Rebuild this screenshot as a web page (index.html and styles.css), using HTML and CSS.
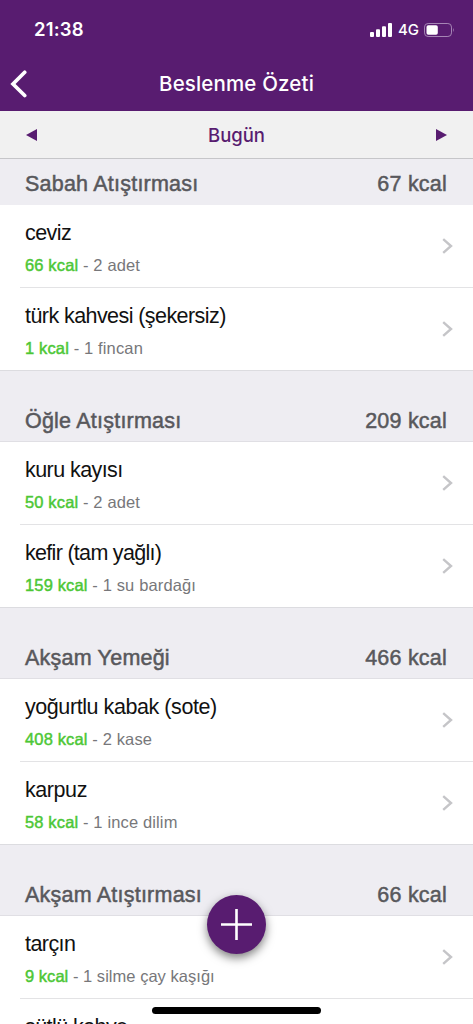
FILE: index.html
```html
<!DOCTYPE html>
<html lang="tr">
<head>
<meta charset="utf-8">
<meta name="viewport" content="width=device-width, initial-scale=1">
<title>Beslenme Özeti</title>
<link rel="stylesheet" href="styles.css">
</head>
<body>
<svg class="defs" width="0" height="0"><symbol id="chevron" viewBox="0 0 11 16"><path d="M1.2 1.2 9 8 1.2 14.8" fill="none" stroke="#c5c5c8" stroke-width="2.4"/></symbol></svg>
<div class="screen">
  <header class="top">
    <div class="status">
      <span class="time">21:38</span>
      <span class="signal">
        <svg width="22" height="14" viewBox="0 0 22 14" fill="#fff"><rect x="0" y="9" width="4" height="5" rx="1"/><rect x="6" y="6.3" width="4" height="7.7" rx="1"/><rect x="12" y="3.3" width="4" height="10.7" rx="1"/><rect x="18" y="0" width="4" height="14" rx="1"/></svg>
        <span class="network">4G</span>
        <svg width="31" height="14" viewBox="0 0 31 14"><rect x=".5" y=".5" width="27" height="13" rx="3.6" fill="none" stroke="#a685b5"/><rect x="2.5" y="2.2" width="11.3" height="9.6" rx="1.8" fill="#fff"/><path d="M29.1 4.8q1.6 2.2 0 4.4z" fill="#a685b5"/></svg>
      </span>
    </div>
    <div class="nav">
      <svg class="back" width="18" height="28" viewBox="0 0 18 28"><path d="M14.7 2.2 3 14 14.7 25.5" fill="none" stroke="#fff" stroke-width="3.7" stroke-linecap="round"/></svg>
      <h1 class="title">Beslenme Özeti</h1>
    </div>
  </header>
  <div class="datebar">
    <svg width="11" height="12" viewBox="0 0 11 12"><path d="M11 0v12L0 6z" fill="#581c70"/></svg>
    <span class="day">Bugün</span>
    <svg width="11" height="12" viewBox="0 0 11 12"><path d="M0 0v12L11 6z" fill="#581c70"/></svg>
  </div>
  <main class="list">
    <section>
      <div class="head first"><h2>Sabah Atıştırması</h2><span class="total">67 kcal</span></div>
      <div class="row"><div class="item"><div class="name">ceviz</div><div class="info"><b>66 kcal</b> - 2 adet</div></div><svg class="go"><use href="#chevron"/></svg></div>
      <div class="row"><div class="item"><div class="name">türk kahvesi (şekersiz)</div><div class="info"><b>1 kcal</b> - 1 fincan</div></div><svg class="go"><use href="#chevron"/></svg></div>
    </section>
    <section>
      <div class="head"><h2>Öğle Atıştırması</h2><span class="total">209 kcal</span></div>
      <div class="row"><div class="item"><div class="name">kuru kayısı</div><div class="info"><b>50 kcal</b> - 2 adet</div></div><svg class="go"><use href="#chevron"/></svg></div>
      <div class="row"><div class="item"><div class="name tight">kefir (tam yağlı)</div><div class="info"><b>159 kcal</b> - 1 su bardağı</div></div><svg class="go"><use href="#chevron"/></svg></div>
    </section>
    <section>
      <div class="head"><h2>Akşam Yemeği</h2><span class="total">466 kcal</span></div>
      <div class="row"><div class="item"><div class="name loose">yoğurtlu kabak (sote)</div><div class="info"><b>408 kcal</b> - 2 kase</div></div><svg class="go"><use href="#chevron"/></svg></div>
      <div class="row"><div class="item"><div class="name loose">karpuz</div><div class="info"><b>58 kcal</b> - 1 ince dilim</div></div><svg class="go"><use href="#chevron"/></svg></div>
    </section>
    <section>
      <div class="head"><h2>Akşam Atıştırması</h2><span class="total">66 kcal</span></div>
      <div class="row"><div class="item"><div class="name">tarçın</div><div class="info snug"><b>9 kcal</b> - 1 silme çay kaşığı</div></div><svg class="go"><use href="#chevron"/></svg></div>
      <div class="row"><div class="item"><div class="name">sütlü kahve</div></div></div>
    </section>
  </main>
  <button class="add" aria-label="Ekle"><svg width="31" height="31" viewBox="0 0 31 31"><path d="M15.5 0v31M0 15.5h31" stroke="#fff" stroke-width="2.6"/></svg></button>
  <div class="home"></div>
</div>
</body>
</html>
```
FILE: styles.css
```css
* { box-sizing: border-box; }
body { margin: 0; font-family: "Liberation Sans", Arial, sans-serif; background: #fff; }
.defs { position: absolute; }
.screen { position: relative; width: 473px; height: 1024px; overflow: hidden; display: flex; flex-direction: column; }
.top { flex: none; height: 111px; background: #581c70; color: #fff; font-family: Inter, sans-serif; }
.status { height: 57px; padding: 2px 18px 0 34px; display: flex; align-items: center; justify-content: space-between; }
.time { font-size: 18.5px; font-weight: 600; letter-spacing: .2px; padding-bottom: 2px; }
.signal { display: flex; align-items: center; }
.network { font-size: 15px; font-weight: 500; margin: 0 5px 0 6px; }
.nav { display: grid; grid-template-columns: 60px 1fr 60px; align-items: center; height: 54px; }
.back { margin-left: 10px; margin-bottom: 1px; }
.title { margin: 0; padding-bottom: 2px; text-align: center; font-size: 20.5px; font-weight: 550; letter-spacing: .15px; white-space: nowrap; }
.datebar { flex: none; height: 48px; padding: 0 26px; display: flex; align-items: center; justify-content: space-between; background: #f1f1f1; border-bottom: 1px solid #c6c6c9; color: #581c70; font-family: Inter, sans-serif; }
.day { font-size: 18.5px; font-weight: 550; }
.list { flex: none; }
.head { height: 71px; padding: 0 26px 8px 25px; display: flex; align-items: flex-end; justify-content: space-between; background: #eeedf2; border-bottom: 1px solid #e0dfe4; color: #58585c; font-size: 21.5px; line-height: 24px; letter-spacing: .22px; -webkit-text-stroke: .5px #58585c; }
.head.first { height: 46px; border-bottom-color: #eeedf2; }
h2 { margin: 0; font: inherit; }
.row { height: 83px; margin-left: 20px; padding: 0 20px 0 5px; display: flex; align-items: center; justify-content: space-between; border-bottom: 1px solid #e3e3e5; }
.row:last-child { margin-left: 0; padding-left: 25px; border-bottom-color: #dcdce0; }
.item { height: 100%; padding-top: 15px; }
.name { font-size: 21.5px; line-height: 26px; letter-spacing: -.57px; color: #111; }
.name.tight { letter-spacing: -.7px; }
.name.loose { letter-spacing: -.43px; }
.info { margin-top: 9px; font-size: 16.5px; line-height: 20px; letter-spacing: .14px; color: #77777a; }
.info.snug { letter-spacing: .03px; }
.info b { font-weight: 400; color: #4cc735; -webkit-text-stroke: .45px #4cc735; }
.go { width: 11px; height: 16px; }
.add { position: absolute; left: 207px; top: 895px; width: 59px; height: 59px; padding: 0; border: 0; border-radius: 50%; background: #581c70; box-shadow: 0 4px 10px rgba(0,0,0,.5); display: grid; place-items: center; }
.home { position: absolute; left: 152px; top: 1007px; width: 169px; height: 7px; border-radius: 4px; background: #000; }
```
